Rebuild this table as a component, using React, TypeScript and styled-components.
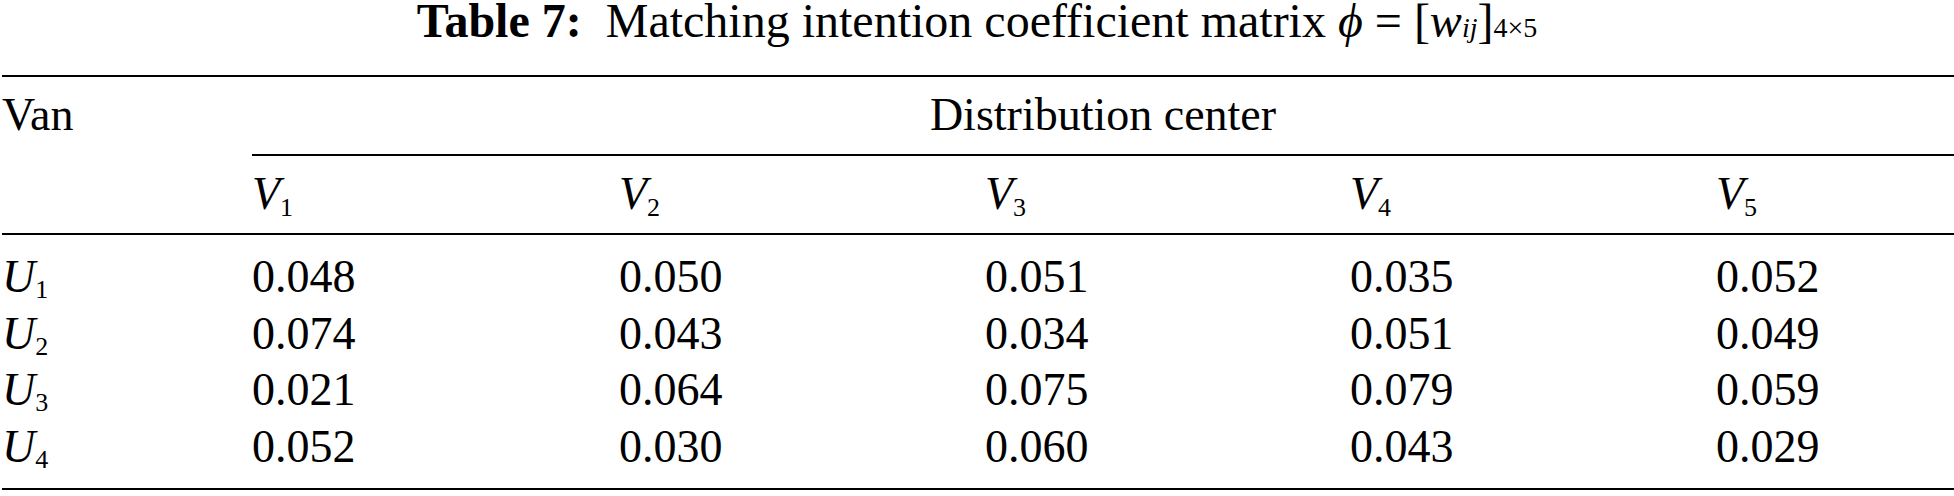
import React from "react";
import styled, { createGlobalStyle } from "styled-components";

const GlobalStyle = createGlobalStyle`
  html, body {
    margin: 0;
    padding: 0;
    background: #ffffff;
  }
  body {
    font-family: "Liberation Serif", "Times New Roman", serif;
    color: #000;
  }
`;

const Page = styled.div`
  width: 1954px;
  height: 496px;
  overflow: hidden;
`;

const Caption = styled.div`
  display: flex;
  justify-content: center;
  align-items: baseline;
  height: 42px;
  margin-bottom: 33px;
  font-size: 48px;
  line-height: 42px;
  white-space: pre;
`;

const Bold = styled.b`
  font-weight: 700;
`;

const Ital = styled.i`
  font-style: italic;
`;

const Equals = styled.span`
  margin: 0 12px;
`;

const Sub = styled.span<{ $italic?: boolean; $size?: number; $drop?: number }>`
  font-size: ${(p) => p.$size ?? 26}px;
  font-style: ${(p) => (p.$italic ? "italic" : "normal")};
  line-height: 1;
  vertical-align: ${(p) => -(p.$drop ?? 6)}px;
`;

const Table = styled.div`
  margin-left: 2px;
  border-top: 2px solid #000;
  border-bottom: 2px solid #000;
  font-size: 46px;
  line-height: 56.4px;
`;

const cols = "250px 367px 366px 365px 366px 1fr";

const Head = styled.div`
  display: grid;
  grid-template-columns: ${cols};
  border-bottom: 2px solid #000;
`;

const VanCell = styled.div`
  grid-row: 1 / span 2;
  padding-top: 10px;
`;

const GroupCell = styled.div`
  grid-column: 2 / -1;
  text-align: center;
  padding: 10px 0 11px;
  border-bottom: 2px solid #000;
`;

const ColHead = styled.div`
  padding: 10px 0 10px;
`;

const Body = styled.div`
  display: grid;
  grid-template-columns: ${cols};
  padding: 14.5px 0 13px;
`;

const Cell = styled.div``;

const heads = ["V", "V", "V", "V", "V"];

const rows: string[][] = [
  ["0.048", "0.050", "0.051", "0.035", "0.052"],
  ["0.074", "0.043", "0.034", "0.051", "0.049"],
  ["0.021", "0.064", "0.075", "0.079", "0.059"],
  ["0.052", "0.030", "0.060", "0.043", "0.029"],
];

export default function App() {
  return (
    <Page>
      <GlobalStyle />
      <Caption>
        <Bold>Table 7:</Bold>
        {"  Matching intention coefficient matrix "}
        <Ital>ϕ</Ital>
        <Equals>=</Equals>[<Ital>w</Ital>
        <Sub $italic $size={28} $drop={8}>ij</Sub>]
        <Sub $size={28} $drop={8}>4×5</Sub>
      </Caption>
      <Table>
        <Head>
          <VanCell>Van</VanCell>
          <GroupCell>Distribution center</GroupCell>
          {heads.map((h, i) => (
            <ColHead key={i}>
              <Ital>{h}</Ital>
              <Sub $drop={7}>{i + 1}</Sub>
            </ColHead>
          ))}
        </Head>
        <Body>
          {rows.map((r, i) => (
            <React.Fragment key={i}>
              <Cell>
                <Ital>U</Ital>
                <Sub>{i + 1}</Sub>
              </Cell>
              {r.map((v, j) => (
                <Cell key={j}>{v}</Cell>
              ))}
            </React.Fragment>
          ))}
        </Body>
      </Table>
    </Page>
  );
}
